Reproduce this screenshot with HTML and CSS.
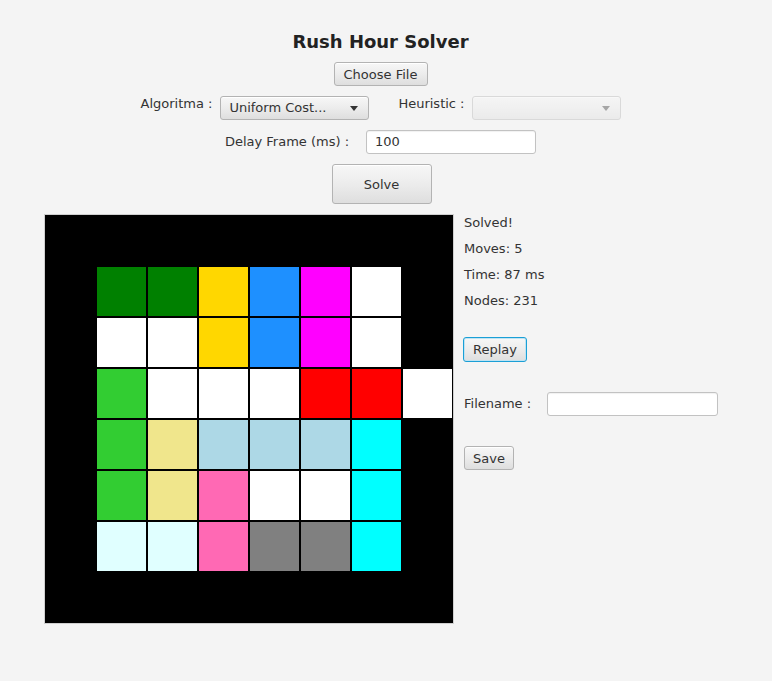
FILE: index.html
```html
<!DOCTYPE html>
<html>
<head>
<meta charset="utf-8">
<link rel="stylesheet" href="styles.css">
</head>
<body>
<div class="app">
  <div class="title">Rush Hour Solver</div>
  <button class="btn btn-choose">Choose File</button>
  <div class="row row-algo">
    <span class="lbl lbl-top">Algoritma :</span>
    <div class="combo combo-algo"><span class="combo-text">Uniform Cost...</span><span class="arrow"></span></div>
    <span class="lbl lbl-top lbl-heur">Heuristic :</span>
    <div class="combo combo-dis"><span class="combo-text"></span><span class="arrow"></span></div>
  </div>
  <div class="row row-delay">
    <span class="lbl">Delay Frame (ms) :</span>
    <div class="field field-delay">100</div>
  </div>
  <button class="btn btn-solve">Solve</button>
  <div class="main">
    <div class="board">
      <div class="brow"><span class="t green"></span><span class="t green"></span><span class="t gold"></span><span class="t blue"></span><span class="t magenta"></span><span class="t white"></span></div>
      <div class="brow"><span class="t white"></span><span class="t white"></span><span class="t gold"></span><span class="t blue"></span><span class="t magenta"></span><span class="t white"></span></div>
      <div class="brow"><span class="t lime"></span><span class="t white"></span><span class="t white"></span><span class="t white"></span><span class="t red"></span><span class="t red"></span><span class="t white"></span></div>
      <div class="brow"><span class="t lime"></span><span class="t khaki"></span><span class="t lblue"></span><span class="t lblue"></span><span class="t lblue"></span><span class="t cyan"></span></div>
      <div class="brow"><span class="t lime"></span><span class="t khaki"></span><span class="t pink"></span><span class="t white"></span><span class="t white"></span><span class="t cyan"></span></div>
      <div class="brow"><span class="t lcyan"></span><span class="t lcyan"></span><span class="t pink"></span><span class="t gray"></span><span class="t gray"></span><span class="t cyan"></span></div>
    </div>
    <div class="panel">
      <div class="stat">Solved!</div>
      <div class="stat">Moves: 5</div>
      <div class="stat">Time: 87 ms</div>
      <div class="stat">Nodes: 231</div>
      <button class="btn btn-replay">Replay</button>
      <div class="fname-row">
        <span class="lbl">Filename :</span>
        <div class="field field-name"></div>
      </div>
      <button class="btn btn-save">Save</button>
    </div>
  </div>
</div>
</body>
</html>
```
FILE: styles.css
```css
html, body {
  margin: 0;
  padding: 0;
  background: #f4f4f4;
}
body {
  font-family: "DejaVu Sans", "Liberation Sans", sans-serif;
  font-size: 13px;
  color: #333333;
}
.app {
  width: 761px;
  display: flex;
  flex-direction: column;
  align-items: center;
  padding-top: 31px;
}
.title {
  font-size: 18px;
  font-weight: bold;
  line-height: 22px;
  height: 22px;
  color: #222222;
}
.btn {
  font-family: "DejaVu Sans", "Liberation Sans", sans-serif;
  font-size: 13px;
  color: #333333;
  border: 1px solid #b3b3b3;
  border-radius: 3px;
  background: linear-gradient(to bottom, #f7f7f7 0%, #ececec 50%, #dedede 100%);
  box-shadow: inset 0 1px 0 #ffffff;
  padding: 0;
  margin: 0;
  box-sizing: border-box;
  display: flex;
  align-items: center;
  justify-content: center;
}
.btn-choose {
  width: 94px;
  height: 24px;
  margin-top: 9px;
}
.row {
  display: flex;
  align-items: center;
}
.row-algo {
  margin-top: 10px;
  height: 24px;
}
.lbl {
  line-height: 16px;
  white-space: nowrap;
}
.lbl-top {
  align-self: flex-start;
}
.combo {
  box-sizing: border-box;
  height: 24px;
  width: 149px;
  border: 1px solid #b3b3b3;
  border-radius: 3px;
  background: linear-gradient(to bottom, #f7f7f7 0%, #ececec 50%, #dedede 100%);
  box-shadow: inset 0 1px 0 #ffffff;
  display: flex;
  align-items: center;
  justify-content: space-between;
  padding: 0 10px 0 8px;
}
.combo-algo {
  margin-left: 8px;
}
.combo-text {
  line-height: 16px;
}
.arrow {
  width: 0;
  height: 0;
  border-left: 4px solid transparent;
  border-right: 4px solid transparent;
  border-top: 5px solid #333333;
}
.lbl-heur {
  margin-left: 29px;
}
.combo-dis {
  opacity: 0.4;
  margin-left: 7px;
}
.row-delay {
  margin-top: 10px;
  height: 24px;
}
.field {
  box-sizing: border-box;
  height: 24px;
  border: 1px solid #c2c2c2;
  border-radius: 3px;
  background: #ffffff;
  box-shadow: inset 0 1px 1px rgba(0,0,0,0.06);
  padding: 0 8px;
  line-height: 22px;
  color: #333333;
}
.field-delay {
  width: 170px;
  margin-left: 17px;
  padding-left: 8px;
}
.btn-solve {
  width: 100px;
  height: 40px;
  margin-top: 10px;
  margin-left: 2px;
}
.main {
  align-self: flex-start;
  margin-left: 44px;
  margin-top: 10px;
  display: flex;
  gap: 10px;
}
.board {
  background: #000000;
  border: 1px solid #cfcfcf;
  padding: 52px 0 0 52px;
  box-sizing: content-box;
  width: 356px;
  height: 356px;
}
.brow {
  display: flex;
  gap: 2px;
  height: 49px;
  margin-bottom: 2px;
}
.t {
  display: block;
  width: 49px;
  height: 49px;
  flex: none;
}
.green { background: #008000; }
.gold { background: #ffd700; }
.blue { background: #1e90ff; }
.magenta { background: #ff00ff; }
.white { background: #ffffff; }
.lime { background: #32cd32; }
.red { background: #ff0000; }
.khaki { background: #f0e68c; }
.lblue { background: #add8e6; }
.cyan { background: #00ffff; }
.pink { background: #ff69b4; }
.lcyan { background: #e0ffff; }
.gray { background: #808080; }
.panel {
  display: flex;
  flex-direction: column;
  align-items: flex-start;
  padding-top: 1px;
}
.stat {
  line-height: 16px;
  height: 16px;
  margin-bottom: 10px;
}
.btn-replay {
  margin-top: 18px;
  margin-left: -1px;
  width: 64px;
  height: 25px;
  border-color: #1a9fd6;
  box-shadow: inset 0 0 0 1px #bfe3f2;
}
.fname-row {
  display: flex;
  align-items: center;
  margin-top: 30px;
  height: 24px;
}
.field-name {
  width: 171px;
  margin-left: 16px;
}
.btn-save {
  margin-top: 30px;
  width: 50px;
  height: 24px;
}
```
